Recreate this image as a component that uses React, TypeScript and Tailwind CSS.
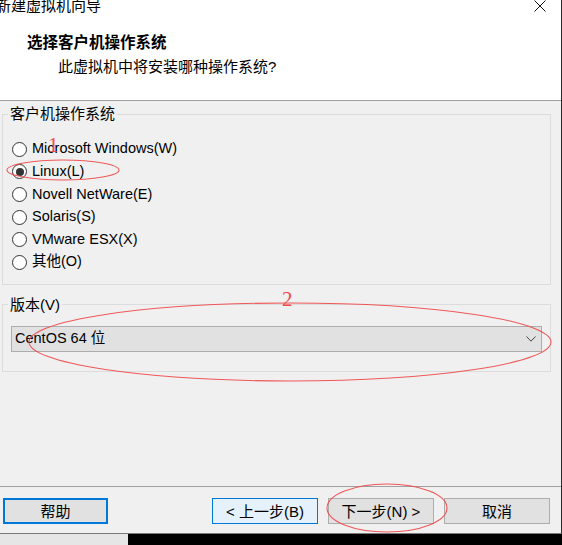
import React from 'react';

const osList = [
  { label: 'Microsoft Windows(W)', checked: false },
  { label: 'Linux(L)', checked: true },
  { label: 'Novell NetWare(E)', checked: false },
  { label: 'Solaris(S)', checked: false },
  { label: 'VMware ESX(X)', checked: false },
  { label: '其他(O)', checked: false },
];

function Radio({ checked }: { checked: boolean }) {
  return (
    <span className="w-[15px] h-[15px] rounded-full border border-[#333] bg-white flex items-center justify-center shrink-0">
      {checked && <span className="w-[8px] h-[8px] rounded-full bg-[#333]" />}
    </span>
  );
}

function Annotations() {
  // red marks drawn over the dialog
  return (
    <svg className="absolute left-0 top-0 pointer-events-none" width="562" height="545">
      <g fill="none" stroke="#f04848" strokeWidth="1.1" opacity="0.9">
        <ellipse cx="63" cy="170" rx="56" ry="10" />
        <ellipse cx="290" cy="342" rx="261" ry="39" />
        <ellipse cx="387" cy="508" rx="60" ry="24" />
      </g>
      <text x="48" y="152" fill="#f04848" fontSize="21" fontFamily="'Liberation Serif', serif">1</text>
      <text x="282" y="306" fill="#f04848" fontSize="21" fontFamily="'Liberation Serif', serif">2</text>
    </svg>
  );
}

export default function App() {
  return (
    <div className="relative w-[562px] h-[545px] overflow-hidden bg-black font-['Liberation_Sans','Noto_Sans_CJK_SC',sans-serif] text-black">
      <div className="flex flex-col w-[562px] h-[534px] bg-[#f0f0f0] border-r border-b border-r-[#2b2b2b] border-b-[#7a7a7a]">
        {/* header */}
        <div className="h-[101px] bg-white border-b border-[#a0a0a0] flex flex-col">
          <div className="h-[13px] overflow-hidden flex justify-between">
            <span className="text-[15px] leading-[15px] -mt-[2px] -ml-[4px] whitespace-nowrap">新建虚拟机向导</span>
            <svg width="12" height="12" viewBox="0 0 12 12" className="mr-[15px]">
              <path d="M0.5 0.5 L11.5 11.5 M11.5 0.5 L0.5 11.5" stroke="#111" strokeWidth="1" />
            </svg>
          </div>
          <div className="mt-[20px] ml-[27px] text-[15.5px] leading-[20px] font-bold">选择客户机操作系统</div>
          <div className="mt-[4px] ml-[58px] text-[15px] leading-[20px]">此虚拟机中将安装哪种操作系统?</div>
        </div>

        {/* body */}
        <div className="flex-1 pt-[5px]">
          <fieldset className="ml-[2px] w-[549px] border border-[#dcdcdc] pl-[9px] pt-[16px] pb-[10px]">
            <legend className="-ml-[4px] px-[2px] text-[15px] leading-[16px]">客户机操作系统</legend>
            {osList.map((os) => (
              <div key={os.label} className="h-[22.6px] flex items-center gap-[5px] text-[14.5px]">
                <Radio checked={os.checked} />
                <span>{os.label}</span>
              </div>
            ))}
          </fieldset>

          <fieldset className="mt-[12px] ml-[2px] w-[549px] border border-[#dcdcdc] pl-[8px] pr-[8px] pt-[13px] pb-[19px]">
            <legend className="-ml-[3px] px-[2px] text-[15px] leading-[16px]">版本(V)</legend>
            <div className="h-[26px] border border-[#adadad] bg-[#e1e1e1] flex items-center justify-between pl-[3px] pr-[5px] pt-[1px] text-[14.5px]">
              <span>CentOS 64 位</span>
              <svg width="10" height="6" viewBox="0 0 10 6">
                <polyline points="0.5,0.5 5,5.2 9.5,0.5" fill="none" stroke="#444" strokeWidth="1" />
              </svg>
            </div>
          </fieldset>
        </div>

        {/* footer */}
        <div className="h-[47px] border-t border-[#a0a0a0] pt-[11px] pl-[3px] pr-[11px] flex justify-between items-start text-[15px]">
          <button className="w-[105px] h-[26px] border-2 border-[#0078d7] bg-[#e1e1e1] flex items-center justify-center leading-none">
            帮助
          </button>
          <div className="flex gap-[10px]">
            <button className="w-[106px] h-[26px] border border-[#0078d7] bg-[#e5f1fb] flex items-center justify-center leading-none">
              &lt; 上一步(B)
            </button>
            <button className="w-[106px] h-[26px] border border-[#adadad] bg-[#e1e1e1] flex items-center justify-center leading-none">
              下一步(N) &gt;
            </button>
            <button className="w-[106px] h-[26px] border border-[#adadad] bg-[#e1e1e1] flex items-center justify-center leading-none">
              取消
            </button>
          </div>
        </div>
      </div>

      {/* strip below the window */}
      <div className="flex h-[11px]">
        <div className="w-[128px] bg-[#e6e6e6]" />
        <div className="flex-1 bg-black" />
      </div>

      <Annotations />
    </div>
  );
}
